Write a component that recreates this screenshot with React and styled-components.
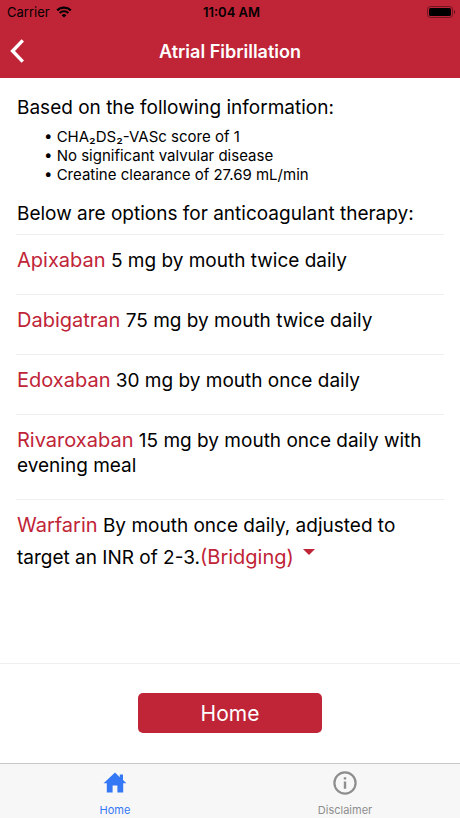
import React from "react";
import styled, { createGlobalStyle } from "styled-components";

const red = "#c02437";

const options = [
  { name: "Apixaban", dose: "5 mg by mouth twice daily" },
  { name: "Dabigatran", dose: "75 mg by mouth twice daily" },
  { name: "Edoxaban", dose: "30 mg by mouth once daily" },
  { name: "Rivaroxaban", dose: "15 mg by mouth once daily with evening meal" },
];

function StatusBar() {
  return (
    <Status>
      <Carrier>
        Carrier
        <svg width="16" height="12" viewBox="0 0 16 12" aria-hidden="true">
          <path
            d="M1.2 4.4a9.7 9.7 0 0 1 13.6 0M3.7 7a6.1 6.1 0 0 1 8.6 0"
            fill="none"
            stroke="#000"
            strokeWidth="2.2"
          />
          <path d="M8 11.6 5.6 9.2a3.4 3.4 0 0 1 4.8 0z" />
        </svg>
      </Carrier>
      <Time>11:04 AM</Time>
      <Battery>
        <svg width="29" height="12" viewBox="0 0 29 12" aria-hidden="true">
          <rect x="0.5" y="0.5" width="25" height="11" rx="3" fill="none" stroke="#000" strokeOpacity="0.4" />
          <rect x="2" y="2" width="22" height="8" rx="1.5" />
          <path d="M27 4c1.6.6 1.6 3.4 0 4z" fillOpacity="0.5" />
        </svg>
      </Battery>
    </Status>
  );
}

function App() {
  return (
    <Page>
      <GlobalStyle />
      <Header>
        <StatusBar />
        <Nav>
          <BackButton type="button" aria-label="Back">
            <svg width="14" height="24" viewBox="0 0 14 24" aria-hidden="true">
              <path d="M12.8 1.4 2.6 12l10.2 10.6" fill="none" stroke="#fff" strokeWidth="3.4" />
            </svg>
          </BackButton>
          <Title>Atrial Fibrillation</Title>
        </Nav>
      </Header>

      <Content>
        <Lead>Based on the following information:</Lead>
        <Facts>
          <li>• CHA₂DS₂-VASc score of 1</li>
          <li>• No significant valvular disease</li>
          <li>• Creatine clearance of 27.69 mL/min</li>
        </Facts>
        <Lead>Below are options for anticoagulant therapy:</Lead>
        <Options>
          {options.map((option) => (
            <Option key={option.name}>
              <Drug href="#">{option.name}</Drug> {option.dose}
            </Option>
          ))}
          <Option $tall>
            <Drug href="#">Warfarin</Drug> By mouth once daily, adjusted to
            target an INR of 2-3.
            <Bridging type="button">
              (Bridging)
              <svg width="12" height="6" viewBox="0 0 12 6" aria-hidden="true">
                <path d="M0 0h12L6 6z" fill={red} />
              </svg>
            </Bridging>
          </Option>
        </Options>
      </Content>

      <Footer>
        <HomeButton type="button">Home</HomeButton>
      </Footer>

      <Tabs>
        <Tab href="#" $active>
          <svg width="24" height="24" viewBox="0 0 24 24" aria-hidden="true">
            <path d="M12 1.6.6 12.200h3.200V21.500h5.800v-7h4.800v7h5.800v-9.300h3.200L20 9.100V3.600h-3.200v2.600z" fill="currentColor" />
          </svg>
          Home
        </Tab>
        <Tab href="#">
          <svg width="24" height="24" viewBox="0 0 24 24" aria-hidden="true">
            <circle cx="12" cy="12" r="10.600" fill="none" stroke="currentColor" strokeWidth="2.200" />
            <path d="M10.800 10.600h2.400v7.200h-2.400zM10.800 6.200h2.400v2.400h-2.400z" fill="currentColor" />
          </svg>
          Disclaimer
        </Tab>
      </Tabs>
    </Page>
  );
}

export default App;

const GlobalStyle = createGlobalStyle`
  * {
    box-sizing: border-box;
  }
  body {
    margin: 0;
    background: #fff;
    color: #000;
    font-family: Inter, "Liberation Sans", sans-serif;
  }
  button {
    font-family: inherit;
    border: none;
    background: none;
    padding: 0;
    cursor: pointer;
  }
`;

const Page = styled.div`
  min-height: 100vh;
  display: flex;
  flex-direction: column;
`;

const Header = styled.header`
  background: ${red};
`;

const Status = styled.div`
  display: grid;
  grid-template-columns: 1fr auto 1fr;
  align-items: center;
  height: 24px;
  padding: 0 4px 0 7px;
  font-size: 13px;
`;

const Carrier = styled.div`
  display: flex;
  align-items: center;
  gap: 6px;
`;

const Time = styled.span`
  font-weight: 600;
`;

const Battery = styled.div`
  display: flex;
  justify-content: flex-end;
`;

const Nav = styled.nav`
  display: grid;
  grid-template-columns: 40px 1fr 40px;
  align-items: center;
  height: 54px;
`;

const BackButton = styled.button`
  display: flex;
  padding-left: 10px;
`;

const Title = styled.h1`
  margin: 0;
  text-align: center;
  color: #fff;
  font-size: 18px;
  font-weight: 600;
`;

const Content = styled.main`
  flex: 1;
  padding: 17px 16px;
`;

const Lead = styled.p`
  margin: 0;
  padding: 0 1px;
  font-size: 19px;
  line-height: 25px;
`;

const Facts = styled.ul`
  list-style: none;
  margin: 7px 0 8px;
  padding: 0 0 9px 28px;
  font-size: 15px;
  line-height: 19px;
`;

const Options = styled.ul`
  list-style: none;
  margin: 8px 0 0;
  padding: 0;
`;

const Option = styled.li`
  border-top: 1px solid #efefef;
  padding: ${(props) => (props.$tall ? "10px 1px 0" : "13px 1px 21px")};
  font-size: 19px;
  line-height: ${(props) => (props.$tall ? "32px" : "25px")};
`;

const Drug = styled.a`
  color: ${red};
  font-size: 20px;
  line-height: 24px;
  text-decoration: none;
`;

const Bridging = styled.button`
  color: ${red};
  font-size: 20px;
  line-height: 24px;

  svg {
    margin-left: 9px;
    vertical-align: 9px;
  }
`;

const Footer = styled.footer`
  display: flex;
  justify-content: center;
  border-top: 1px solid #efefef;
  padding: 29px 16px 30px;
`;

const HomeButton = styled.button`
  width: 43%;
  height: 40px;
  border-radius: 5px;
  background: ${red};
  color: #fff;
  font-size: 21px;
`;

const Tabs = styled.nav`
  display: flex;
  height: 55px;
  border-top: 1px solid #c8c8c8;
  background: #f7f7f7;
`;

const Tab = styled.a`
  flex: 1;
  display: flex;
  flex-direction: column;
  align-items: center;
  gap: 8px;
  padding-top: 7px;
  color: ${(props) => (props.$active ? "#3478f6" : "#8e8e8e")};
  font-size: 11px;
  line-height: 14px;
  text-decoration: none;
`;
